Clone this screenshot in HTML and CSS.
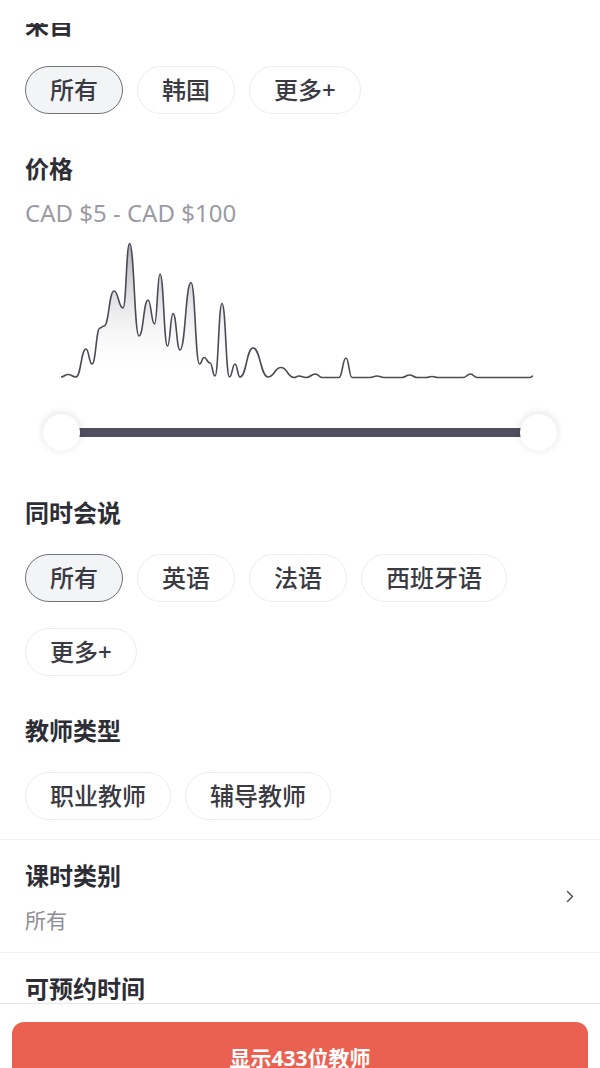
FILE: index.html
```html
<!DOCTYPE html>
<html lang="zh-CN">
<head>
    <meta charset="UTF-8">
    <meta name="viewport" content="width=device-width, initial-scale=1.0">
    <title>筛选</title>
    <link rel="stylesheet" href="styles.css">
</head>
<body>
    <div class="scroll">
        <section class="filter filter-first">
            <h2 class="title">来自</h2>
            <div class="chips">
                <span class="chip active">所有</span>
                <span class="chip">韩国</span>
                <span class="chip">更多+</span>
            </div>
        </section>

        <section class="filter filter-price">
            <h2 class="title">价格</h2>
            <div class="range-text">CAD $5 - CAD $100</div>
            <svg class="histogram" width="550" height="145" viewBox="25 235 550 145">
                <defs>
                    <linearGradient id="histFill" gradientUnits="userSpaceOnUse" x1="0" y1="243" x2="0" y2="377">
                        <stop offset="0" stop-color="#9c9ca6" stop-opacity="0.8"/>
                        <stop offset="1" stop-color="#ffffff" stop-opacity="0"/>
                    </linearGradient>
                </defs>
                <path class="hist-area" d="M61,376 C64.5,376 64.5,373.5 68,373.5 C72,373.5 72,376 76,376 C81,376 81,348 86,348 C89,348 89,363 92,363 C96,363 96,327 100,327 C102,327 102,325 104,325 C109,325 109,290 114,290 C118.5,290 118.5,307 123,307 C126.3,307 126.3,242.5 129.5,242.5 C134.3,242.5 134.3,335 139,335 C143.5,335 143.5,299 148,299 C151.3,299 151.3,323 154.5,323 C157.3,323 157.3,273 160,273 C163.8,273 163.8,345 167.5,345 C170.3,345 170.3,312.5 173,312.5 C176.5,312.5 176.5,349 180,349 C185.5,349 185.5,281.5 191,281.5 C195.3,281.5 195.3,363 199.5,363 C201.8,363 201.8,356.5 204,356.5 C207,356.5 207,362 210,362 C212.5,362 212.5,375 215,375 C218.5,375 218.5,302.5 222,302.5 C225.8,302.5 225.8,376 229.5,376 C232.3,376 232.3,363 235,363 C237.5,363 237.5,376 240,376 C246.5,376 246.5,347 253,347 C260.5,347 260.5,376 268,376 L533,377 L61,377 Z"/>
                <path class="hist-line" d="M61,376 C64.5,376 64.5,373.5 68,373.5 C72,373.5 72,376 76,376 C81,376 81,348 86,348 C89,348 89,363 92,363 C96,363 96,327 100,327 C102,327 102,325 104,325 C109,325 109,290 114,290 C118.5,290 118.5,307 123,307 C126.3,307 126.3,242.5 129.5,242.5 C134.3,242.5 134.3,335 139,335 C143.5,335 143.5,299 148,299 C151.3,299 151.3,323 154.5,323 C157.3,323 157.3,273 160,273 C163.8,273 163.8,345 167.5,345 C170.3,345 170.3,312.5 173,312.5 C176.5,312.5 176.5,349 180,349 C185.5,349 185.5,281.5 191,281.5 C195.3,281.5 195.3,363 199.5,363 C201.8,363 201.8,356.5 204,356.5 C207,356.5 207,362 210,362 C212.5,362 212.5,375 215,375 C218.5,375 218.5,302.5 222,302.5 C225.8,302.5 225.8,376 229.5,376 C232.3,376 232.3,363 235,363 C237.5,363 237.5,376 240,376 C246.5,376 246.5,347 253,347 C260.5,347 260.5,376 268,376 C274.5,376 274.5,366.5 281,366.5 C287.5,366.5 287.5,376.5 294,376.5 C296.5,376.5 296.5,375 299,375 C302.5,375 302.5,376.5 306,376.5 C310.8,376.5 310.8,373 315.5,373 C318.8,373 318.8,376.5 322,376.5 L339,376.5 C342.5,376.5 342.5,357 346,357 C349,357 349,376.5 352,376.5 L370,376.5 C373.5,376.5 373.5,375 377,375 C380.5,375 380.5,376.5 384,376.5 L402,376.5 C405.8,376.5 405.8,374 409.5,374 C413.3,374 413.3,376.5 417,376.5 L426,376.5 C429,376.5 429,375.5 432,375.5 C435,375.5 435,376.5 438,376.5 L463,376.5 C466.8,376.5 466.8,373 470.5,373 C473.8,373 473.8,376.5 477,376.5 L530,376.5 C531.5,376.5 531.5,375 533,375"/>
            </svg>
            <div class="slider">
                <div class="slider-track"></div>
                <span class="thumb thumb-left"></span>
                <span class="thumb thumb-right"></span>
            </div>
        </section>

        <section class="filter">
            <h2 class="title">同时会说</h2>
            <div class="chips">
                <span class="chip active">所有</span>
                <span class="chip">英语</span>
                <span class="chip">法语</span>
                <span class="chip">西班牙语</span>
                <span class="chip">更多+</span>
            </div>
        </section>

        <section class="filter filter-last">
            <h2 class="title">教师类型</h2>
            <div class="chips">
                <span class="chip">职业教师</span>
                <span class="chip">辅导教师</span>
            </div>
        </section>

        <div class="row-item">
            <div class="row-text">
                <h2 class="title">课时类别</h2>
                <div class="row-value">所有</div>
            </div>
            <svg class="chevron" width="8" height="13" viewBox="0 0 8 13">
                <polyline points="1.5,1.5 6.5,6.5 1.5,11.5" fill="none" stroke="#55555d" stroke-width="1.5" stroke-linecap="round" stroke-linejoin="round"/>
            </svg>
        </div>

        <div class="row-item">
            <div class="row-text">
                <h2 class="title">可预约时间</h2>
            </div>
        </div>
    </div>

    <footer class="footer">
        <button class="show-btn">显示433位教师</button>
    </footer>
</body>
</html>
```

FILE: styles.css
```css
body {
    margin: 0;
    font-family: 'Noto Sans', 'Noto Sans CJK SC', sans-serif;
    background-color: #ffffff;
    color: #2d2d35;
    height: 100vh;
    overflow: hidden;
}

.scroll {
    height: 980px;
    margin-top: 23px;
    overflow: hidden;
}

.filter {
    padding: 0 25px;
}

.filter + .filter {
    margin-top: 39px;
}

.filter-first {
    margin-top: -14.5px;
}

.filter-price {
    padding-bottom: 7px;
}

.filter-last {
    padding-bottom: 19px;
}

.title {
    margin: 0;
    font-size: 24px;
    line-height: 32px;
    font-weight: 600;
    color: #2d2d35;
}

.chips {
    display: flex;
    flex-wrap: wrap;
    gap: 26px 14px;
    margin-top: 25px;
}

.chip {
    display: block;
    padding: 0 24px;
    height: 46px;
    line-height: 46px;
    font-size: 24px;
    font-weight: 500;
    color: #3a3a42;
    border: 1px solid #ececef;
    border-radius: 24px;
    background-color: #ffffff;
}

.chip.active {
    background-color: #f3f4f6;
    border-color: #707079;
}

.range-text {
    margin-top: 12px;
    font-size: 24px;
    line-height: 32px;
    color: #9b9ba3;
}

.histogram {
    display: block;
    margin-top: 7px;
}

.hist-area {
    fill: url(#histFill);
}

.hist-line {
    fill: none;
    stroke: #4b4a55;
    stroke-width: 1.6;
    stroke-linejoin: round;
}

.slider {
    position: relative;
    height: 37px;
    margin: 33px 18px 0;
}

.slider-track {
    position: absolute;
    left: 19px;
    right: 19px;
    top: 14px;
    height: 9px;
    background-color: #504f60;
}

.thumb {
    position: absolute;
    top: 0;
    width: 37px;
    height: 37px;
    border-radius: 50%;
    background-color: #ffffff;
    box-shadow: 0 -1px 8px rgba(0, 0, 0, 0.13);
}

.thumb-left {
    left: 0;
}

.thumb-right {
    right: 0;
}

.row-item {
    display: flex;
    align-items: center;
    justify-content: space-between;
    padding: 20px 25px 18px;
    border-top: 1px solid #f1f1f3;
}

.row-value {
    margin-top: 14px;
    font-size: 21px;
    line-height: 28px;
    color: #8e8e96;
}

.chevron {
    display: block;
    margin-right: 1px;
}

.footer {
    height: 64px;
    padding: 18px 12px 0;
    border-top: 1px solid #e8e8eb;
    overflow: hidden;
}

.show-btn {
    display: block;
    width: 100%;
    height: 70px;
    border: none;
    border-radius: 12px;
    background-color: #ea6152;
    color: #ffffff;
    font-family: 'Noto Sans', 'Noto Sans CJK SC', sans-serif;
    font-size: 21px;
    font-weight: 700;
}
```
